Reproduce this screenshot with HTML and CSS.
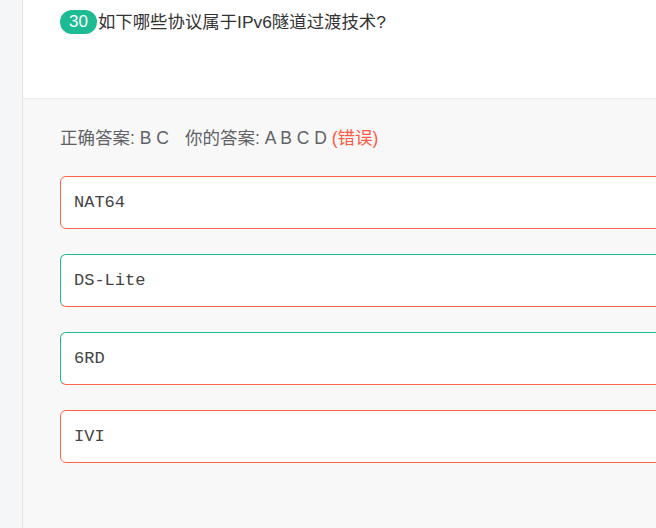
FILE: index.html
```html
<!DOCTYPE html>
<html lang="zh">
<head>
<meta charset="utf-8">
<link rel="stylesheet" href="styles.css">
</head>
<body>
<div class="page">
  <aside class="sidebar"></aside>
  <main class="content">
    <div class="question">
      <span class="badge">30</span><span class="qtext">如下哪些协议属于IPv6隧道过渡技术?</span>
    </div>
    <div class="answers">
      <div class="result">正确答案: B C<span class="yours">你的答案: A B C D</span> <span class="wrong">(错误)</span></div>
      <div class="option wrong-opt">NAT64</div>
      <div class="option right-opt">DS-Lite</div>
      <div class="option right-opt">6RD</div>
      <div class="option wrong-opt">IVI</div>
    </div>
  </main>
</div>
</body>
</html>
```
FILE: styles.css
```css
html, body {
  margin: 0;
  padding: 0;
  overflow: hidden;
  height: 100%;
}
body {
  font-family: "Liberation Sans", "Noto Sans CJK SC", sans-serif;
  background: #f8f8f8;
}
.page {
  display: flex;
  height: 528px;
}
.sidebar {
  flex: none;
  width: 22px;
  background: #f5f6f8;
  border-right: 1px solid #e2e2e2;
}
.content {
  flex: none;
  width: 760px;
  display: flex;
  flex-direction: column;
}
.question {
  height: 99px;
  box-sizing: border-box;
  background: #fff;
  border-bottom: 1px solid #ececec;
  padding: 10px 0 0 37px;
  display: flex;
  align-items: flex-start;
}
.badge {
  display: inline-block;
  height: 24px;
  line-height: 24px;
  padding: 0 9px;
  border-radius: 12px;
  background: #1dbb94;
  color: #fff;
  font-size: 17px;
}
.qtext {
  font-size: 17.4px;
  line-height: 24px;
  color: #333;
  margin-left: 1px;
}
.answers {
  flex: 1;
  background: #f8f8f8;
  padding: 27px 0 0 37px;
}
.result {
  font-size: 17.5px;
  line-height: 24px;
  color: #606266;
  margin-bottom: 26px;
}
.yours {
  margin-left: 16px;
}
.wrong {
  color: #ff5a45;
}
.option {
  box-sizing: border-box;
  height: 53px;
  margin-bottom: 25px;
  background: #fff;
  border: 1px solid #ff6546;
  border-radius: 6px;
  padding-left: 13px;
  display: flex;
  align-items: center;
  font-family: "Liberation Mono", monospace;
  font-size: 17px;
  color: #444;
}
.option.right-opt {
  border-color: #1dbb94 #1dbb94 #ff6546 #1dbb94;
}
```
